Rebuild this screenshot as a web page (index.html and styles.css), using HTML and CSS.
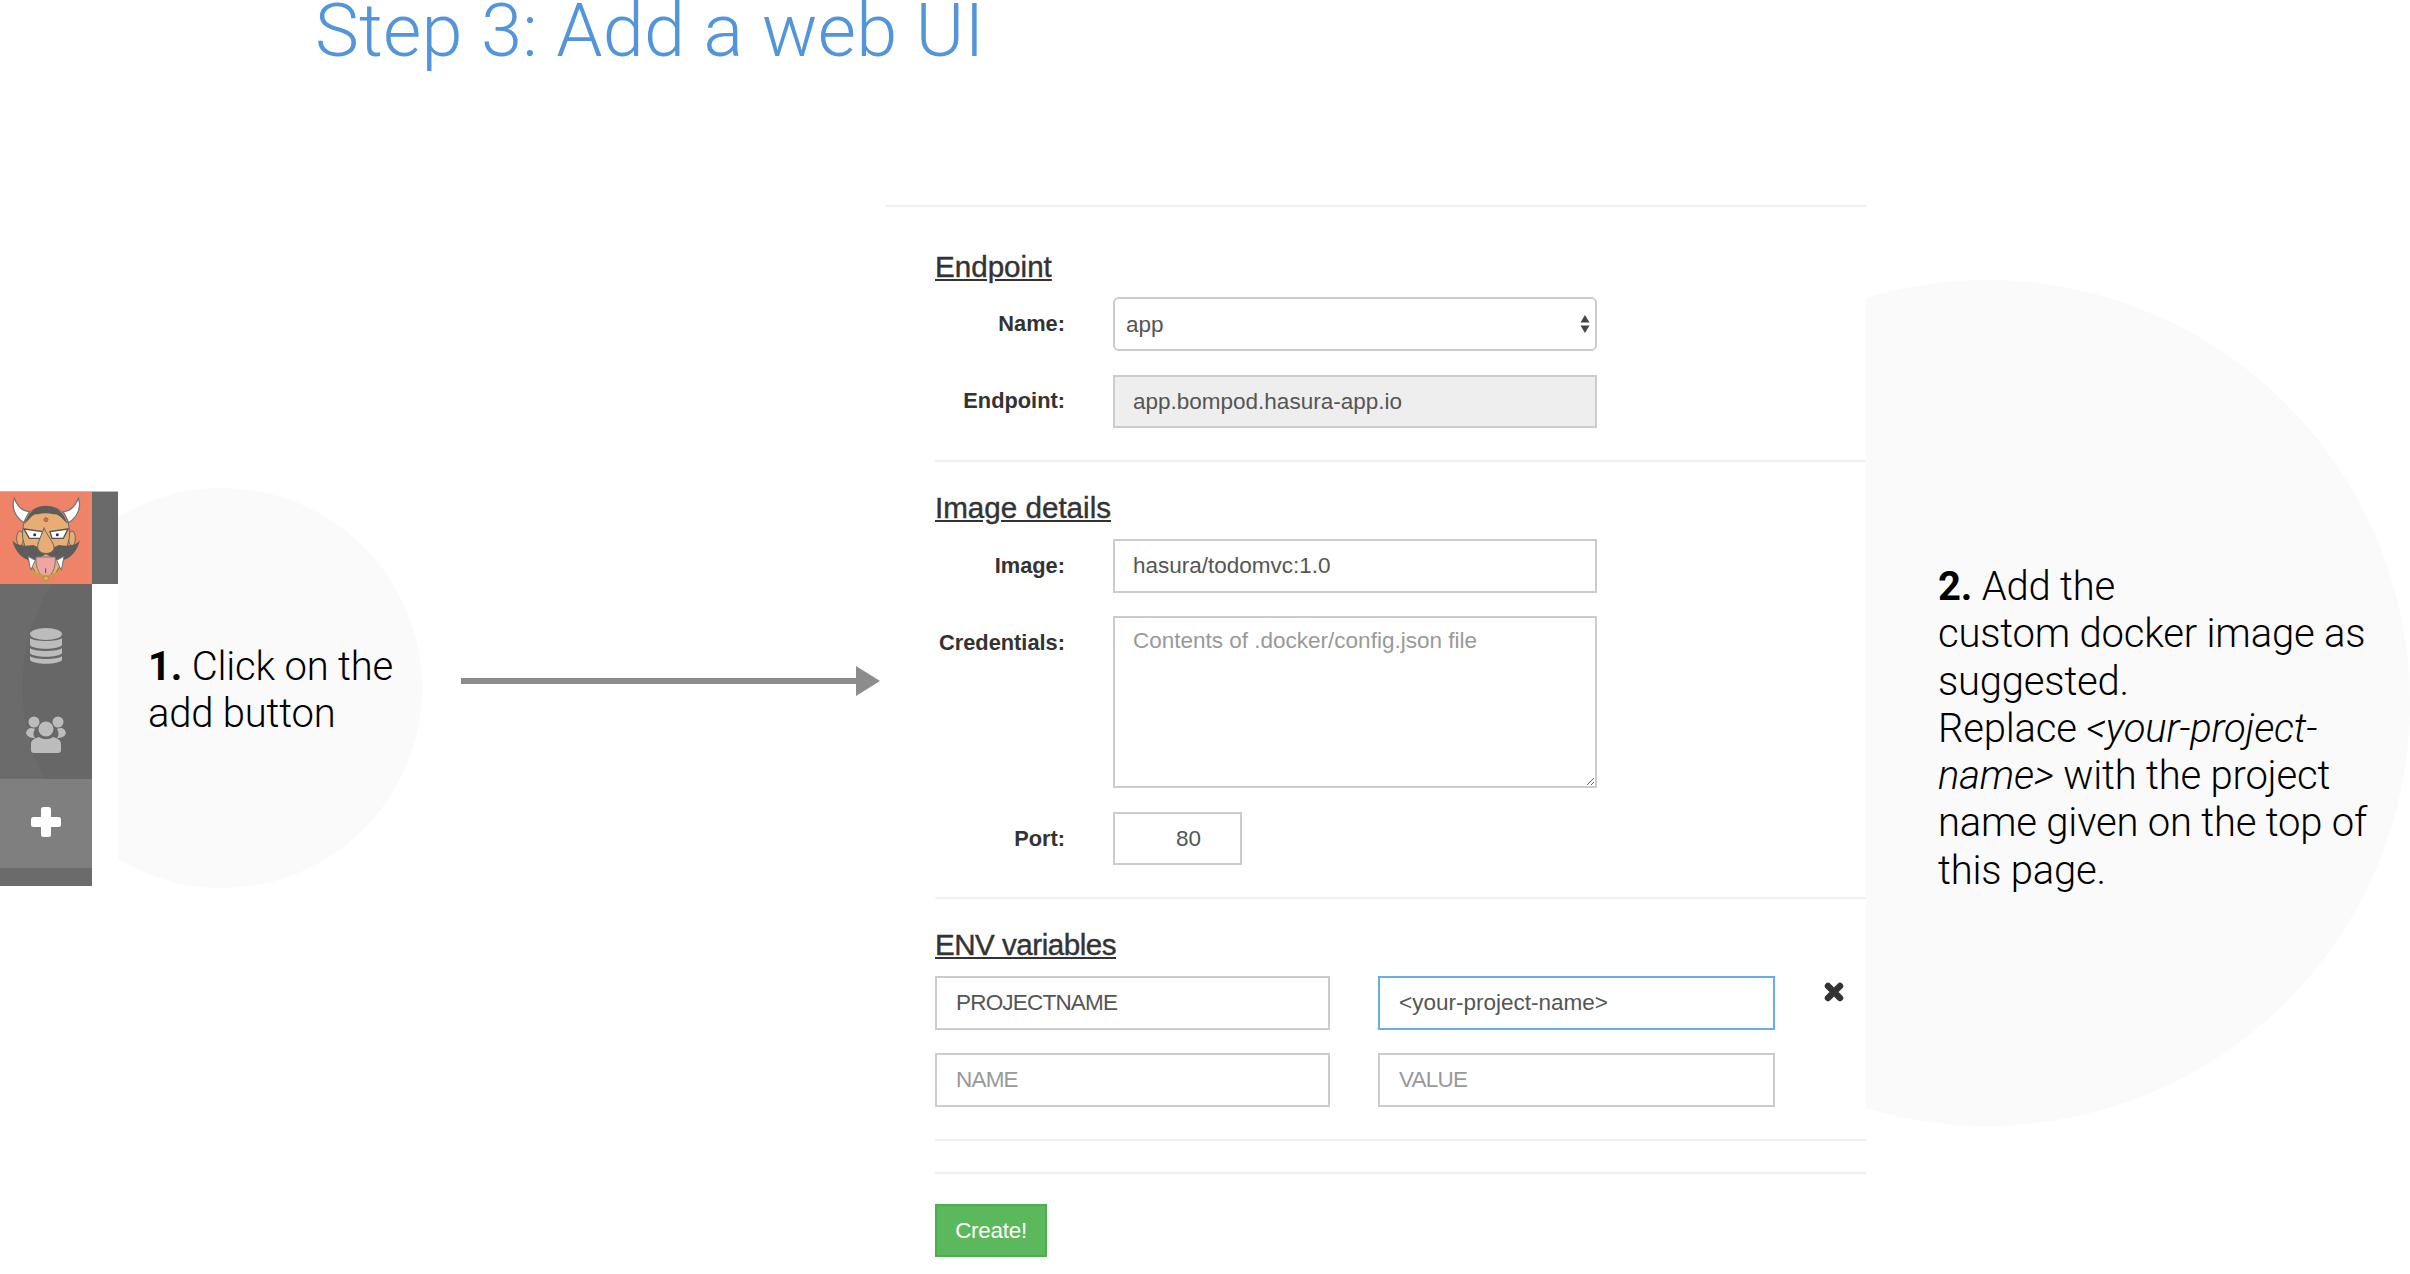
FILE: index.html
```html
<!DOCTYPE html>
<html>
<head>
	<meta charset="utf-8">
	<title>Step 3: Add a web UI</title>
	<link rel="stylesheet" href="styles.css">
</head>
<body>
	<h1 class="title">Step 3: Add a web UI</h1>

	<div class="layout">
		<div class="sidebar">
			<div class="sidebar-top">
				<div class="avatar">
					<svg width="92" height="92" viewBox="0 33 276 276">
						<!-- horns -->
						<path d="M43 52C33 78 45 108 72 125L88 92C66 90 52 76 43 52Z" fill="#fff" stroke="#777" stroke-width="4"/>
						<path d="M235 52C245 78 233 108 206 125L190 92C212 90 226 76 235 52Z" fill="#fff" stroke="#777" stroke-width="4"/>
						<!-- ears -->
						<ellipse cx="60" cy="172" rx="10" ry="22" fill="#e8ad73" stroke="#666" stroke-width="3"/>
						<ellipse cx="216" cy="172" rx="10" ry="22" fill="#e8ad73" stroke="#666" stroke-width="3"/>
						<!-- head -->
						<path d="M68 170C64 100 100 76 138 76C178 76 212 100 208 170L190 240L165 280H110L85 240Z" fill="#e8ad73" stroke="#666" stroke-width="3"/>
						<path d="M74 128C84 92 110 75 138 75C166 75 192 92 202 128L186 112C176 102 168 98 160 100C146 96 128 96 114 100C106 98 98 102 90 112Z" fill="#5c5c5c"/>
						<circle cx="138" cy="116" r="6" fill="#d0745a" stroke="#8a4a3a" stroke-width="2"/>
						<!-- eyes -->
						<path d="M72 144L128 152L122 172H88Z" fill="#fff" stroke="#555" stroke-width="4"/>
						<path d="M204 144L150 152L156 172H190Z" fill="#fff" stroke="#555" stroke-width="4"/>
						<circle cx="104" cy="161" r="4.5" fill="#333"/>
						<circle cx="172" cy="161" r="4.5" fill="#333"/>
						<!-- moustache, fangs, tongue -->
						<path d="M37 178C50 196 74 196 100 192C116 204 160 204 176 192C202 196 226 196 240 178C232 212 205 244 172 238L138 220L104 238C72 244 44 212 37 178Z" fill="#5c5c5c"/>
						<path d="M84 226L106 238L92 268Z" fill="#fff" stroke="#777" stroke-width="3"/>
						<path d="M192 226L170 238L184 268Z" fill="#fff" stroke="#777" stroke-width="3"/>
						<path d="M108 228H166C168 262 154 288 137 288C120 288 106 262 108 228Z" fill="#f0a5a5" stroke="#777" stroke-width="3"/>
						<path d="M137 262V276" stroke="#555" stroke-width="3"/>
						<!-- nose -->
						<path d="M132 140C138 160 166 188 162 204C154 222 122 222 114 204C108 188 128 160 132 140Z" fill="#e8ad73" stroke="#666" stroke-width="3"/>
						<!-- necklace -->
						<path d="M98 268C104 290 172 290 178 268" fill="none" stroke="#c9a13a" stroke-width="6"/>
						<circle cx="138" cy="292" r="7" fill="#e0b84c" stroke="#a8862e" stroke-width="2"/>
					</svg>
				</div>
				<div class="strip"></div>
			</div>
			<div class="nav">
				<div class="nav-arc"></div>
				<div class="nav-item nav-db">
					<svg width="32" height="36" viewBox="0 0 32 36">
						<ellipse cx="16" cy="6" rx="16" ry="6" fill="#bcbcbc"/>
						<path d="M0 10C3 14 29 14 32 10V17C29 22 3 22 0 17Z" fill="#bcbcbc"/>
						<path d="M0 20C3 24 29 24 32 20V25C29 30 3 30 0 25Z" fill="#bcbcbc"/>
						<path d="M0 28C3 32 29 32 32 28V32C28 37 4 37 0 32Z" fill="#bcbcbc"/>
					</svg>
				</div>
				<div class="nav-item nav-users">
					<svg width="40" height="37" viewBox="0 0 40 37">
						<circle cx="8" cy="6" r="5.5" fill="#bcbcbc"/>
						<circle cx="32" cy="6" r="5.5" fill="#bcbcbc"/>
						<path d="M0 17C1 12 5 11 9 13C7 17 7 19 9 22C5 22 1 21 0 17Z" fill="#bcbcbc"/>
						<path d="M40 17C39 12 35 11 31 13C33 17 33 19 31 22C35 22 39 21 40 17Z" fill="#bcbcbc"/>
						<circle cx="20" cy="13" r="7.5" fill="#bcbcbc"/>
						<path d="M5 34V28C5 24 9 22 13 21C17 24 23 24 27 21C31 22 35 24 35 28V34C35 36 34 37 32 37H8C6 37 5 36 5 34Z" fill="#bcbcbc"/>
					</svg>
				</div>
				<div class="nav-add">
					<svg width="30" height="30" viewBox="0 0 30 30">
						<rect x="0" y="10" width="30" height="10" rx="2.5" fill="#fff"/>
						<rect x="10" y="0" width="10" height="30" rx="2.5" fill="#fff"/>
					</svg>
				</div>
			</div>
		</div>

		<div class="callout callout-one">
			<div class="circle circle-one"></div>
			<p class="callout-text"><b>1.</b> Click on the<br>add button</p>
		</div>

		<div class="arrow">
			<div class="arrow-line"></div>
			<div class="arrow-head"></div>
		</div>

		<form class="panel">
			<section class="section section-first">
				<h2 class="section-title section-title-first">Endpoint</h2>
				<div class="fields">
					<label class="field-label">Name:</label>
					<div class="select-wrap">
						<select class="control select"><option>app</option></select>
						<svg class="select-arrows" width="10" height="20" viewBox="0 0 10 20">
							<path d="M5 1L9.5 8.5H.5ZM5 19L.5 11.5H9.5Z" fill="#444"/>
						</svg>
					</div>
					<label class="field-label">Endpoint:</label>
					<input class="control control-disabled" type="text" value="app.bompod.hasura-app.io" disabled>
				</div>
			</section>

			<section class="section">
				<h2 class="section-title">Image details</h2>
				<div class="fields">
					<label class="field-label">Image:</label>
					<input class="control" type="text" value="hasura/todomvc:1.0">
					<label class="field-label field-label-top">Credentials:</label>
					<textarea class="control textarea" placeholder="Contents of .docker/config.json file"></textarea>
					<label class="field-label">Port:</label>
					<input class="control port" type="text" value="80">
				</div>
			</section>

			<section class="section">
				<h2 class="section-title section-title-env">ENV variables</h2>
				<div class="env">
					<input class="control control-caps" type="text" value="PROJECTNAME">
					<input class="control control-focus" type="text" value="&lt;your-project-name&gt;">
					<svg class="env-remove" width="20" height="20" viewBox="0 0 20 20">
						<path d="M4 4L16 16M16 4L4 16" stroke="#333" stroke-width="6.5" stroke-linecap="round"/>
					</svg>
					<input class="control control-caps" type="text" placeholder="NAME">
					<input class="control control-caps" type="text" placeholder="VALUE">
				</div>
			</section>

			<div class="spacer"></div>

			<button class="create" type="button">Create!</button>
		</form>

		<div class="callout callout-two">
			<div class="circle circle-two"></div>
			<p class="callout-text"><b>2.</b> Add the<br>custom docker image as<br>suggested.<br>Replace <i>&lt;your-project-<br>name&gt;</i> with the project<br>name given on the top of<br>this page.</p>
		</div>
	</div>
</body>
</html>
```
FILE: styles.css
```css
html, body {
	margin: 0;
	padding: 0;
	background: #fff;
	overflow: hidden;
}
body {
	width: 2410px;
	height: 1274px;
	font-family: "Liberation Sans", Arial, sans-serif;
}

.title {
	margin: 0;
	height: 205px;
	padding-left: 315px;
	box-sizing: border-box;
	font-family: Roboto, "Liberation Sans", sans-serif;
	font-weight: 300;
	font-size: 74px;
	letter-spacing: 0.2px;
	line-height: 62px;
	color: #5295da;
}

.layout {
	display: flex;
	align-items: flex-start;
}

/* sidebar */
.sidebar {
	position: relative;
	z-index: 2;
	width: 118px;
	margin-top: 286px;
	background: #fff;
	border-top: 1px solid #bbb;
}
.sidebar-top {
	display: flex;
}
.avatar {
	width: 92px;
	height: 92px;
	background: #ee8367;
}
.avatar svg {
	display: block;
}
.strip {
	width: 26px;
	background: #696969;
}
.nav {
	position: relative;
	width: 92px;
	height: 302px;
	background: #6b6b6b;
	overflow: hidden;
}
.nav-arc {
	position: absolute;
	left: 22px;
	top: -96px;
	width: 400px;
	height: 400px;
	border-radius: 50%;
	background: rgba(0,0,0,0.03);
}
.nav-item {
	position: relative;
	display: flex;
	justify-content: center;
}
.nav-db {
	padding-top: 44px;
}
.nav-users {
	padding-top: 52px;
}
.nav-add {
	position: relative;
	display: flex;
	justify-content: center;
	align-items: center;
	box-sizing: border-box;
	height: 89px;
	margin-top: 26px;
	padding-bottom: 4px;
	background: #7f7f7f;
}

/* callouts */
.callout {
	position: relative;
}
.callout-text {
	position: relative;
	margin: 0;
	font-family: Roboto, "Liberation Sans", sans-serif;
	font-weight: 300;
	font-size: 40px;
	letter-spacing: -0.2px;
	line-height: 47.3px;
	color: #000;
	white-space: nowrap;
}
.callout-text b {
	font-weight: 700;
}
.callout-one {
	width: 313px;
	padding-left: 30px;
	margin-top: 438px;
}
.callout-two {
	padding-left: 72px;
	margin-top: 358px;
}
.circle {
	position: absolute;
	border-radius: 50%;
	background: #fafafa;
}
.circle-one {
	left: -96px;
	top: -155px;
	width: 400px;
	height: 400px;
}
.circle-two {
	left: -302px;
	top: -283px;
	width: 846px;
	height: 846px;
}

/* arrow */
.arrow {
	display: flex;
	align-items: center;
	position: relative;
	width: 419px;
	margin-top: 461px;
	margin-right: 6px;
}
.arrow-line {
	flex: 1;
	height: 6px;
	background: #8c8c8c;
}
.arrow-head {
	width: 0;
	height: 0;
	border-left: 24px solid #8c8c8c;
	border-top: 15px solid transparent;
	border-bottom: 15px solid transparent;
}

/* form */
.panel {
	position: relative;
	z-index: 1;
	width: 980px;
	height: 1069px;
	box-sizing: border-box;
	padding-left: 49px;
	background: #fff;
	border-top: 2px solid #f0f0f0;
	color: #333;
}
.section {
	padding: 29px 0 32px;
	border-bottom: 2px solid #f0f0f0;
}
.section-first {
	padding-top: 43px;
}
.section-title {
	margin: 0 0 14px;
	font-size: 29.6px;
	font-weight: 400;
	line-height: 34px;
	text-decoration: underline;
	-webkit-text-stroke: 0.4px #333;
}
.section-title-first {
	margin-bottom: 13px;
}
.section-title-env {
	letter-spacing: -0.5px;
}
.fields {
	display: grid;
	grid-template-columns: 130px 484px;
	column-gap: 48px;
	row-gap: 23px;
	align-items: center;
}
.field-label {
	text-align: right;
	font-size: 21.8px;
	font-weight: 700;
}
.field-label-top {
	align-self: start;
	padding-top: 14px;
}
.control {
	display: block;
	width: 100%;
	height: 54px;
	box-sizing: border-box;
	margin: 0;
	padding: 0 18px;
	border: 2px solid #ccc;
	border-radius: 0;
	outline: none;
	background: #fff;
	font-family: "Liberation Sans", Arial, sans-serif;
	font-size: 22.5px;
	color: #555;
}
.control::placeholder {
	color: #999;
	opacity: 1;
}
.control-disabled {
	height: 53px;
	margin-top: 1px;
	background: #eee;
}
.control-focus {
	border-color: #66afe9;
}
.control-caps {
	letter-spacing: -0.8px;
}
.select-wrap {
	position: relative;
}
.select {
	padding: 0 11px;
	border-radius: 6px;
	appearance: none;
}
.select-arrows {
	position: absolute;
	right: 7px;
	top: 17px;
}
.textarea {
	height: 172px;
	margin-bottom: 1px;
	padding-top: 10px;
	resize: both;
}
.port {
	width: 129px;
	height: 53px;
	padding-left: 61px;
}
.env {
	display: grid;
	grid-template-columns: 395px 397px 20px;
	column-gap: 48px;
	row-gap: 23px;
}
.env-remove {
	margin-top: 6px;
	margin-left: 1px;
}
.env .control {
	padding-left: 19px;
}
.spacer {
	height: 31px;
	border-bottom: 2px solid #f0f0f0;
}
.create {
	display: block;
	width: 112px;
	height: 53px;
	margin-top: 30px;
	padding: 0;
	border: 2px solid #4cae4c;
	background: #5cb85c;
	color: #fff;
	font-family: "Liberation Sans", Arial, sans-serif;
	font-size: 22.5px;
	letter-spacing: -0.3px;
}
```
